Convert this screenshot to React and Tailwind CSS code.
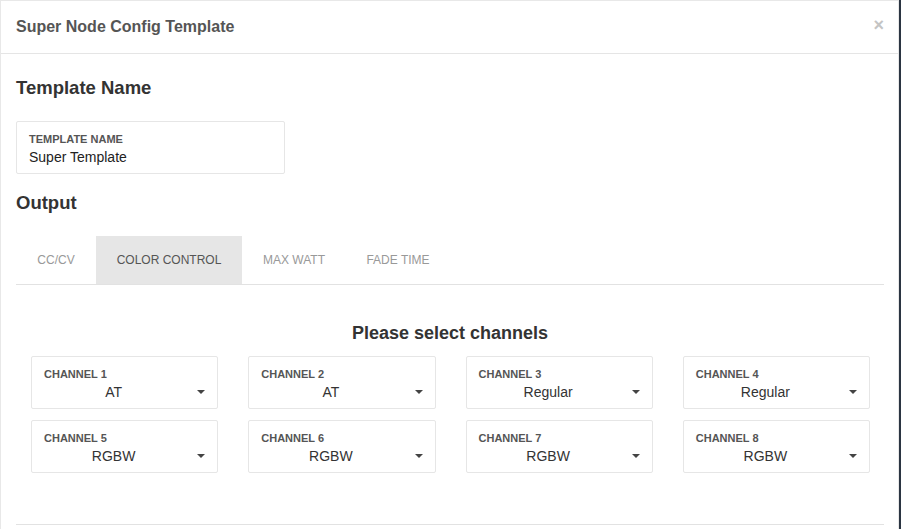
import { useState } from 'react';

const CHANNELS = [
  { label: 'CHANNEL 1', value: 'AT' },
  { label: 'CHANNEL 2', value: 'AT' },
  { label: 'CHANNEL 3', value: 'Regular' },
  { label: 'CHANNEL 4', value: 'Regular' },
  { label: 'CHANNEL 5', value: 'RGBW' },
  { label: 'CHANNEL 6', value: 'RGBW' },
  { label: 'CHANNEL 7', value: 'RGBW' },
  { label: 'CHANNEL 8', value: 'RGBW' },
];

const TABS = [
  { name: 'CC/CV', w: 'w-[80px]' },
  { name: 'COLOR CONTROL', w: 'w-[146px]' },
  { name: 'MAX WATT', w: 'w-[104px]' },
  { name: 'FADE TIME', w: 'w-[104px]' },
];

function Caret() {
  return (
    <svg width="8" height="4" viewBox="0 0 8 4" className="shrink-0">
      <path d="M0 0 L8 0 L4 4 Z" fill="#444" />
    </svg>
  );
}

function ChannelSelect({ label, value }) {
  return (
    <div className="h-[53px] border border-[#e6e6e6] rounded-[2px] bg-white pl-[12px] pr-[12px] pt-[11px]">
      <div className="text-[11px] font-bold text-[#555] leading-[13px]">{label}</div>
      <div className="flex items-center mt-[2px]">
        <div className="flex-1 text-center text-[14px] text-[#333] leading-[18px] pr-[14px]">{value}</div>
        <Caret />
      </div>
    </div>
  );
}

export default function App() {
  const [active, setActive] = useState(1);

  return (
    <div className="w-[901px] h-[529px] bg-[#2b3542] overflow-hidden" style={{ fontFamily: '"Liberation Sans", Arial, sans-serif' }}>
      <div className="w-[899px] h-[529px] bg-white border-l border-r border-t border-[#e8e8e8] flex flex-col">
        {/* Header */}
        <div className="h-[53px] shrink-0 border-b border-[#e5e5e5] flex items-center justify-between pl-[15px] pr-[14px]">
          <h3 className="text-[16px] font-bold text-[#555]">Super Node Config Template</h3>
          <span className="text-[18px] font-bold text-[#c4c4c4] leading-none pb-[4px]">×</span>
        </div>

        {/* Body */}
        <div className="pl-[15px] pr-[14px] pt-[23px]">
          <h4 className="text-[18.5px] font-bold text-[#333] leading-[22px]">Template Name</h4>

          <div className="mt-[22px] w-[269px] h-[53px] border border-[#e6e6e6] rounded-[2px] pl-[12px] pt-[11px]">
            <div className="text-[11px] font-bold text-[#555] leading-[13px]">TEMPLATE NAME</div>
            <div className="text-[14px] text-[#222] leading-[18px] mt-[2px]">Super Template</div>
          </div>

          <h4 className="mt-[18px] text-[18.5px] font-bold text-[#333] leading-[22px]">Output</h4>

          <div className="mt-[22px] flex border-b border-[#e2e2e2]">
            {TABS.map((t, i) => (
              <button
                key={t.name}
                onClick={() => setActive(i)}
                className={`${t.w} h-[48px] text-[12px] leading-none ${i === active ? 'bg-[#e6e6e6] text-[#555]' : 'text-[#999]'}`}
              >
                {t.name}
              </button>
            ))}
          </div>

          <div className="pt-[37px] pb-[51px] border-b border-[#e2e2e2]">
            <h4 className="text-center text-[18px] font-bold text-[#333] leading-[22px]">Please select channels</h4>
            <div className="mt-[12px] pl-[15px] pr-[14px] grid grid-cols-4 gap-x-[30px] gap-y-[11px]">
              {CHANNELS.map(c => (
                <ChannelSelect key={c.label} label={c.label} value={c.value} />
              ))}
            </div>
          </div>
        </div>
      </div>
    </div>
  );
}
